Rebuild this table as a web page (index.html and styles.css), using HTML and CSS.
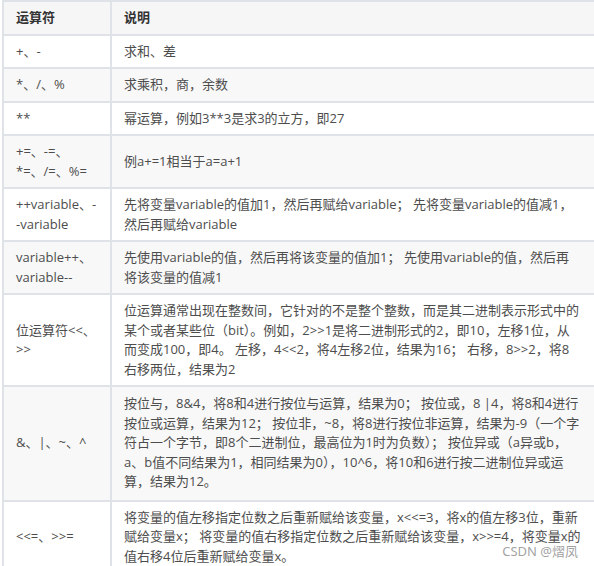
FILE: index.html
```html
<!DOCTYPE html>
<html lang="zh-CN">
<head>
<meta charset="utf-8">
<title>运算符</title>
<link rel="stylesheet" href="styles.css">
</head>
<body>
<div class="page">
<table class="ops">
  <thead>
    <tr><th class="c1">运算符</th><th class="c2">说明</th></tr>
  </thead>
  <tbody>
    <tr><td class="c1">+、-</td><td class="c2">求和、差</td></tr>
    <tr><td class="c1">*、/、%</td><td class="c2">求乘积，商，余数</td></tr>
    <tr><td class="c1">**</td><td class="c2">幂运算，例如3**3是求3的立方，即27</td></tr>
    <tr><td class="c1">+=、-=、<br>*=、/=、%=</td><td class="c2">例a+=1相当于a=a+1</td></tr>
    <tr><td class="c1">++variable、-<br>-variable</td><td class="c2">先将变量variable的值加1，然后再赋给variable； 先将变量variable的值减1，<br>然后再赋给variable</td></tr>
    <tr><td class="c1">variable++、<br>variable--</td><td class="c2">先使用variable的值，然后再将该变量的值加1； 先使用variable的值，然后再<br>将该变量的值减1</td></tr>
    <tr><td class="c1">位运算符&lt;&lt;、<br>&gt;&gt;</td><td class="c2">位运算通常出现在整数间，它针对的不是整个整数，而是其二进制表示形式中的<br>某个或者某些位（bit）。例如，2&gt;&gt;1是将二进制形式的2，即10，左移1位，从<br>而变成100，即4。 左移，4&lt;&lt;2，将4左移2位，结果为16； 右移，8&gt;&gt;2，将8<br>右移两位，结果为2</td></tr>
    <tr class="tall"><td class="c1">&amp;、|、~、^</td><td class="c2">按位与，8&amp;4，将8和4进行按位与运算，结果为0； 按位或，8 |4，将8和4进行<br>按位或运算，结果为12； 按位非，~8，将8进行按位非运算，结果为-9（一个字<br>符占一个字节，即8个二进制位，最高位为1时为负数）； 按位异或（a异或b，<br>a、b值不同结果为1，相同结果为0），10^6，将10和6进行按二进制位异或运<br>算，结果为12。</td></tr>
    <tr><td class="c1">&lt;&lt;=、&gt;&gt;=</td><td class="c2">将变量的值左移指定位数之后重新赋给该变量，x&lt;&lt;=3，将x的值左移3位，重新<br>赋给变量x； 将变量的值右移指定位数之后重新赋给该变量，x&gt;&gt;=4，将变量x的<br>值右移4位后重新赋给变量x。</td></tr>
  </tbody>
</table>
<div class="watermark">CSDN @熠凤</div>
</div>
</body>
</html>
```

FILE: styles.css
```css
html, body {
  margin: 0;
  padding: 0;
  background: #ffffff;
  overflow: hidden;
}

.page {
  position: relative;
  width: 594px;
  height: 566px;
  overflow: hidden;
  padding-left: 2px;
  box-sizing: border-box;
}

.ops {
  border-collapse: separate;
  border-spacing: 0;
  border-top: 2px solid #dfe2e6;
  border-left: 2px solid #dfe2e6;
  font-family: "Open Sans", "Noto Sans CJK SC", sans-serif;
  font-size: 13px;
  line-height: 19.5px;
  color: #4d4d4d;
  table-layout: fixed;
  width: 610px;
}

.ops th,
.ops td {
  border-right: 2px solid #dfe2e6;
  border-bottom: 2px solid #dfe2e6;
  padding: 6px 12px;
  text-align: left;
  vertical-align: middle;
}

.ops th {
  font-weight: 700;
  color: #333333;
  background: #f6f6f6;
}

.ops .c1 {
  width: 82px;
}

.ops td.c2 {
  white-space: nowrap;
}

.ops tbody tr:nth-child(even) td {
  background: #f8f8f8;
}

.ops tbody tr:nth-child(odd) td {
  background: #ffffff;
}

.ops tr.tall td {
  padding-top: 7px;
  padding-bottom: 8px;
}

.watermark {
  position: absolute;
  right: 16px;
  top: 544px;
  font-family: "Noto Sans", "Noto Sans CJK SC", sans-serif;
  font-size: 13px;
  line-height: 14px;
  color: rgba(130, 130, 130, 0.75);
}
```
